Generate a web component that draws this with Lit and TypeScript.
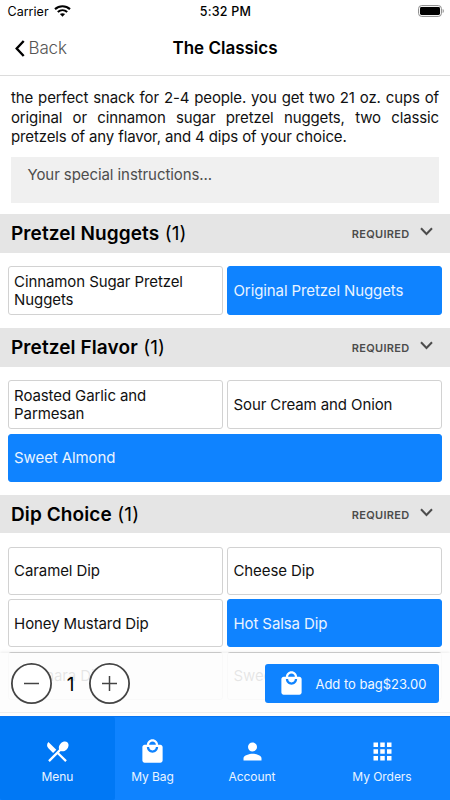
import { LitElement, html, css, svg } from "lit";
import { customElement, property } from "lit/decorators.js";
import { classMap } from "lit/directives/class-map.js";

interface Option {
  label: string;
  selected?: boolean;
  wide?: boolean;
  tall?: boolean;
}

const bagPath =
  "M19 6h-2c0-2.76-2.24-5-5-5S7 3.24 7 6H5c-1.1 0-1.99.9-1.99 2L3 20c0 1.1.9 2 2 2h14c1.1 0 2-.9 2-2V8c0-1.1-.9-2-2-2zm-7-3c1.66 0 3 1.34 3 3H9c0-1.66 1.34-3 3-3zm0 10c-2.76 0-5-2.24-5-5h2c0 1.66 1.34 3 3 3s3-1.34 3-3h2c0 2.76-2.24 5-5 5z";

const icons: Record<string, string> = {
  menu: "M8.1 13.34l2.83-2.83L3.91 3.5c-1.56 1.56-1.56 4.09 0 5.66l4.19 4.18zm6.78-1.81c1.53.71 3.68.21 5.27-1.38 1.91-1.91 2.28-4.65.81-6.12-1.46-1.46-4.2-1.1-6.12.81-1.59 1.59-2.09 3.74-1.38 5.27L3.7 19.87l1.41 1.41L12 14.41l6.88 6.88 1.41-1.41L13.41 13l1.47-1.47z",
  bag: bagPath,
  account:
    "M12 12c2.21 0 4-1.79 4-4s-1.79-4-4-4-4 1.79-4 4 1.79 4 4 4zm0 2c-2.67 0-8 1.34-8 4v2h16v-2c0-2.66-5.33-4-8-4z",
  orders:
    "M4 8h4V4H4v4zm6 12h4v-4h-4v4zm-6 0h4v-4H4v4zm0-6h4v-4H4v4zm6 0h4v-4h-4v4zm6-10v4h4V4h-4zm-6 4h4V4h-4v4zm6 6h4v-4h-4v4zm0 6h4v-4h-4v4z",
};

@customElement("option-group")
export class OptionGroup extends LitElement {
  @property() heading = "";
  @property({ type: Array }) options: Option[] = [];

  static styles = css`
    :host {
      display: block;
    }
    .head {
      box-sizing: border-box;
      height: 38.5px;
      display: flex;
      align-items: center;
      padding: 1.2px 17px 0 11px;
      background: #e5e5e5;
      color: #000;
      font-size: 19px;
      letter-spacing: 0.1px;
    }
    .title {
      flex: 1;
      white-space: pre;
    }
    .title b {
      font-weight: 600;
    }
    .required {
      font-size: 11px;
      font-weight: 600;
      letter-spacing: 0.3px;
      color: #4c4c4c;
      margin-right: 10.5px;
    }
    .chevron {
      margin-top: -4px;
    }
    .grid {
      display: grid;
      grid-template-columns: 215px 215px;
      gap: 4.6px 4.4px;
      padding: 13.4px 7.6px 13px;
    }
    .option {
      box-sizing: border-box;
      height: 48px;
      display: flex;
      align-items: center;
      padding: 1.3px 5.5px 0;
      border: 1px solid #d2d2d2;
      border-radius: 3px;
      background: #fff;
      color: #111;
      font-size: 15px;
      line-height: 18.5px;
      letter-spacing: -0.1px;
    }
    .tall {
      height: 49.2px;
    }
    .selected {
      background: #0f83ff;
      border-color: #0f83ff;
      color: #e9f3ff;
    }
    .wide {
      grid-column: span 2;
    }
  `;

  render() {
    return html`
      <div class="head">
        <div class="title"><b>${this.heading}</b> (1)</div>
        <span class="required">REQUIRED</span>
        <svg class="chevron" width="13" height="9" viewBox="0 0 13 9">
          <path d="M1 1.2 6.5 7 12 1.2" fill="none" stroke="#4c4c4c" stroke-width="2" />
        </svg>
      </div>
      <div class="grid">
        ${this.options.map(
          (o) => html`<div
            class=${classMap({ option: true, selected: !!o.selected, wide: !!o.wide, tall: !!o.tall })}
          >
            ${o.label}
          </div>`
        )}
      </div>
    `;
  }
}

@customElement("app-root")
export class AppRoot extends LitElement {
  static styles = css`
    :host {
      display: flex;
      flex-direction: column;
      position: relative;
      width: 450px;
      height: 800px;
      overflow: hidden;
      background: #fff;
      color: #000;
      font-family: Inter, "Liberation Sans", sans-serif;
    }
    svg {
      display: block;
      flex: none;
    }
    .status {
      height: 22px;
      display: grid;
      grid-template-columns: 1fr auto 1fr;
      align-items: center;
      padding: 0 6.5px 0 7.5px;
      font-size: 12.5px;
    }
    .carrier {
      display: flex;
      align-items: center;
      gap: 5px;
      letter-spacing: 0.02px;
    }
    .time {
      font-weight: 500;
      letter-spacing: 0.25px;
    }
    .battery {
      justify-self: end;
    }
    .nav {
      height: 53px;
      border-bottom: 1px solid #dcdcdc;
      display: grid;
      grid-template-columns: 1fr auto 1fr;
      align-items: center;
      padding: 0 15px;
    }
    .back {
      display: flex;
      align-items: center;
      gap: 3.5px;
      color: #555;
      font-size: 17px;
      font-weight: 300;
      letter-spacing: -0.15px;
      margin-top: -1px;
    }
    .nav-title {
      font-size: 17px;
      font-weight: 600;
      margin-top: -1px;
    }
    .content {
      flex: 1;
      min-height: 0;
      overflow: hidden;
    }
    .description {
      margin: 12px 11px 10px;
      font-size: 15px;
      line-height: 19.7px;
      letter-spacing: -0.13px;
      text-align: justify;
      color: #111;
    }
    .instructions {
      box-sizing: border-box;
      height: 46px;
      margin: 0 11px 10.9px;
      padding: 8px 16.5px;
      background: #f0f0f0;
      color: #4d4d4d;
      font-size: 15px;
      line-height: 19px;
      letter-spacing: -0.08px;
    }
    .order-bar {
      position: absolute;
      left: 0;
      right: 0;
      bottom: 84px;
      height: 63.5px;
      box-sizing: border-box;
      display: flex;
      align-items: center;
      padding: 0 11px 1px;
      background: linear-gradient(#efefef, #efefef) 0 59.5px / 100% 1px no-repeat,
        rgba(253, 253, 253, 0.9);
      box-shadow: 0 -1px 3px rgba(0, 0, 0, 0.08);
    }
    .count {
      width: 37px;
      padding-top: 2px;
      text-align: center;
      font-size: 19px;
    }
    .add {
      margin-left: auto;
      width: 174px;
      height: 39px;
      box-sizing: border-box;
      display: flex;
      align-items: center;
      gap: 11px;
      padding-left: 12.5px;
      border-radius: 3px;
      background: #0f83ff;
      color: #f2f8ff;
      font-size: 13px;
      letter-spacing: -0.03px;
    }
    .tabs {
      height: 84px;
      display: grid;
      grid-template-columns: 115px 75px 124px 136px;
      background: #0f83ff;
      color: #eaf4ff;
      box-sizing: border-box;
      border-top: 1px solid #0876f4;
    }
    .tab {
      display: flex;
      flex-direction: column;
      align-items: center;
      padding-top: 20.5px;
      gap: 4.5px;
      font-size: 12px;
      line-height: 16px;
      letter-spacing: -0.05px;
    }
    .active {
      background: #0078f5;
      border-radius: 0 2px 2px 2px;
    }
  `;

  private tab(icon: string, label: string, active = false) {
    return html`<div class=${classMap({ tab: true, active })}>
      <svg width="27" height="27" viewBox="0 0 24 24"><path d=${icons[icon]} fill="#fff" /></svg>
      <span>${label}</span>
    </div>`;
  }

  private stepper(plus: boolean) {
    return html`<svg width="41" height="41" viewBox="0 0 41 41" fill="none" stroke="#444">
      <circle cx="20.5" cy="20.5" r="19.6" fill="#fff" stroke-width="1.8" />
      <path d="M13 20.5H28" stroke-width="1.5" />
      ${plus ? svg`<path d="M20.5 13V28" stroke-width="1.5" />` : null}
    </svg>`;
  }

  render() {
    return html`
      <div class="status">
        <div class="carrier">
          <span>Carrier</span>
          <svg width="17" height="12" viewBox="0 0 17 12" fill="none" stroke="#000" stroke-width="2.1">
            <path d="M1 4.1C5.2 0.3 11.8 0.3 16 4.1" />
            <path d="M3.8 7C6.5 4.6 10.5 4.6 13.2 7" />
            <path d="M5.9 9.1C7.4 7.8 9.6 7.8 11.1 9.1L8.5 11.8Z" fill="#000" stroke="none" />
          </svg>
        </div>
        <div class="time">5:32 PM</div>
        <svg class="battery" width="26" height="12" viewBox="0 0 26 12">
          <rect x="0.6" y="0.6" width="22.8" height="10.8" rx="3" fill="none" stroke="#888" />
          <rect x="2" y="2" width="20" height="8" rx="1.4" />
          <path d="M24.7 4v4c1.4-.6 1.4-3.4 0-4z" fill="#888" />
        </svg>
      </div>
      <div class="nav">
        <div class="back">
          <svg width="10" height="17" viewBox="0 0 10 17">
            <path d="M8.7 1 1.7 8.5 8.7 16" fill="none" stroke="#000" stroke-width="2.4" />
          </svg>
          <span>Back</span>
        </div>
        <div class="nav-title">The Classics</div>
      </div>
      <div class="content">
        <p class="description">
          the perfect snack for 2-4 people. you get two 21 oz. cups of original or cinnamon sugar
          pretzel nuggets, two classic pretzels of any flavor, and 4 dips of your choice.
        </p>
        <div class="instructions">Your special instructions...</div>
        <option-group
          heading="Pretzel Nuggets"
          .options=${[
            { label: "Cinnamon Sugar Pretzel Nuggets", tall: true },
            { label: "Original Pretzel Nuggets", tall: true, selected: true },
          ]}
        ></option-group>
        <option-group
          heading="Pretzel Flavor"
          .options=${[
            { label: "Roasted Garlic and Parmesan", tall: true },
            { label: "Sour Cream and Onion", tall: true },
            { label: "Sweet Almond", wide: true, selected: true },
          ]}
        ></option-group>
        <option-group
          heading="Dip Choice"
          .options=${[
            { label: "Caramel Dip" },
            { label: "Cheese Dip" },
            { label: "Honey Mustard Dip" },
            { label: "Hot Salsa Dip", selected: true },
            { label: "Marinara Dip" },
            { label: "Sweet Dip" },
          ]}
        ></option-group>
      </div>
      <div class="order-bar">
        ${this.stepper(false)}
        <span class="count">1</span>
        ${this.stepper(true)}
        <div class="add">
          <svg width="27" height="27" viewBox="0 0 24 24"><path d=${bagPath} fill="#fff" /></svg>
          <span>Add to bag$23.00</span>
        </div>
      </div>
      <div class="tabs">
        ${this.tab("menu", "Menu", true)} ${this.tab("bag", "My Bag")}
        ${this.tab("account", "Account")} ${this.tab("orders", "My Orders")}
      </div>
    `;
  }
}
